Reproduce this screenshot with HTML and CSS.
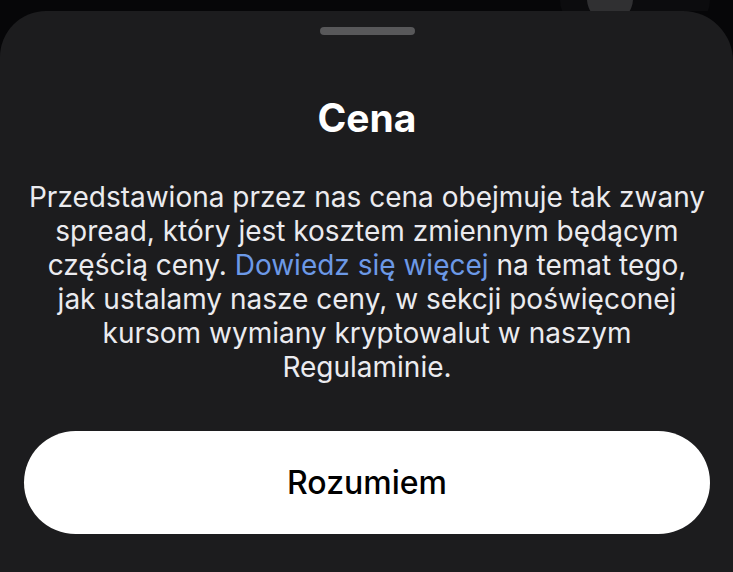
FILE: index.html
```html
<!DOCTYPE html>
<html lang="pl">
<head>
	<meta charset="UTF-8" />
	<title>Cena</title>
	<link rel="stylesheet" href="styles.css">
</head>
<body>
	<div class="behind">
		<div class="behindCard">
			<div class="avatar"></div>
		</div>
	</div>
	<div class="sheet">
		<div class="grabber"></div>
		<h1 class="title">Cena</h1>
		<p class="info">Przedstawiona przez nas cena obejmuje tak zwany spread, który jest kosztem zmiennym będącym częścią ceny. <a href="###" class="more">Dowiedz się więcej</a> na temat tego,<br>jak ustalamy nasze ceny, w sekcji poświęconej kursom wymiany kryptowalut w naszym Regulaminie.</p>
		<a href="###" class="okBtn">Rozumiem</a>
	</div>
</body>
</html>
```

FILE: styles.css
```css
*{
	margin: 0;padding: 0;
	box-sizing: border-box;
}
html,body{
	height: 100%;
}
body{
	background: #060608;
	font-family: Inter, "Noto Sans", sans-serif;
	display: flex;
	flex-direction: column;
	overflow: hidden;
}
a{
	text-decoration: none;
}

/* kawałek widoku pod arkuszem */
.behind{
	height: 11px;
	display: flex;
	justify-content: flex-end;
	padding-right: 23px;
	overflow: hidden;
}
.behindCard{
	width: 150px;
	height: 60px;
	margin-top: -30px;
	border-radius: 40px;
	background: #0c0c0e;
	display: flex;
	justify-content: center;
	padding-right: 50px;
}
.avatar{
	width: 46px;height: 46px;
	margin-top: 6px;
	border-radius: 50%;
	background: #303032;
}

.sheet{
	flex: 1;
	background: #1c1c1e;
	border-radius: 46px 50px 0 0;
	display: flex;
	flex-direction: column;
	align-items: center;
	padding: 16px 23px 0 24px;
}
.grabber{
	width: 95px;height: 8px;
	border-radius: 4px;
	background: #58585a;
}
.title{
	margin-top: 62px;
	font-size: 39px;
	line-height: 41px;
	font-weight: 700;
	color: #fff;
}
.info{
	margin-top: 42px;
	font-size: 28px;
	line-height: 34px;
	color: #ebebef;
	text-align: center;
}
.more{
	color: #6c99e7;
}
.okBtn{
	margin-top: 47px;
	width: 100%;
	height: 103px;
	flex-shrink: 0;
	border-radius: 52px;
	background: #fff;
	color: #000;
	font-size: 32px;
	font-weight: 500;
	display: flex;
	align-items: center;
	justify-content: center;
}
```
